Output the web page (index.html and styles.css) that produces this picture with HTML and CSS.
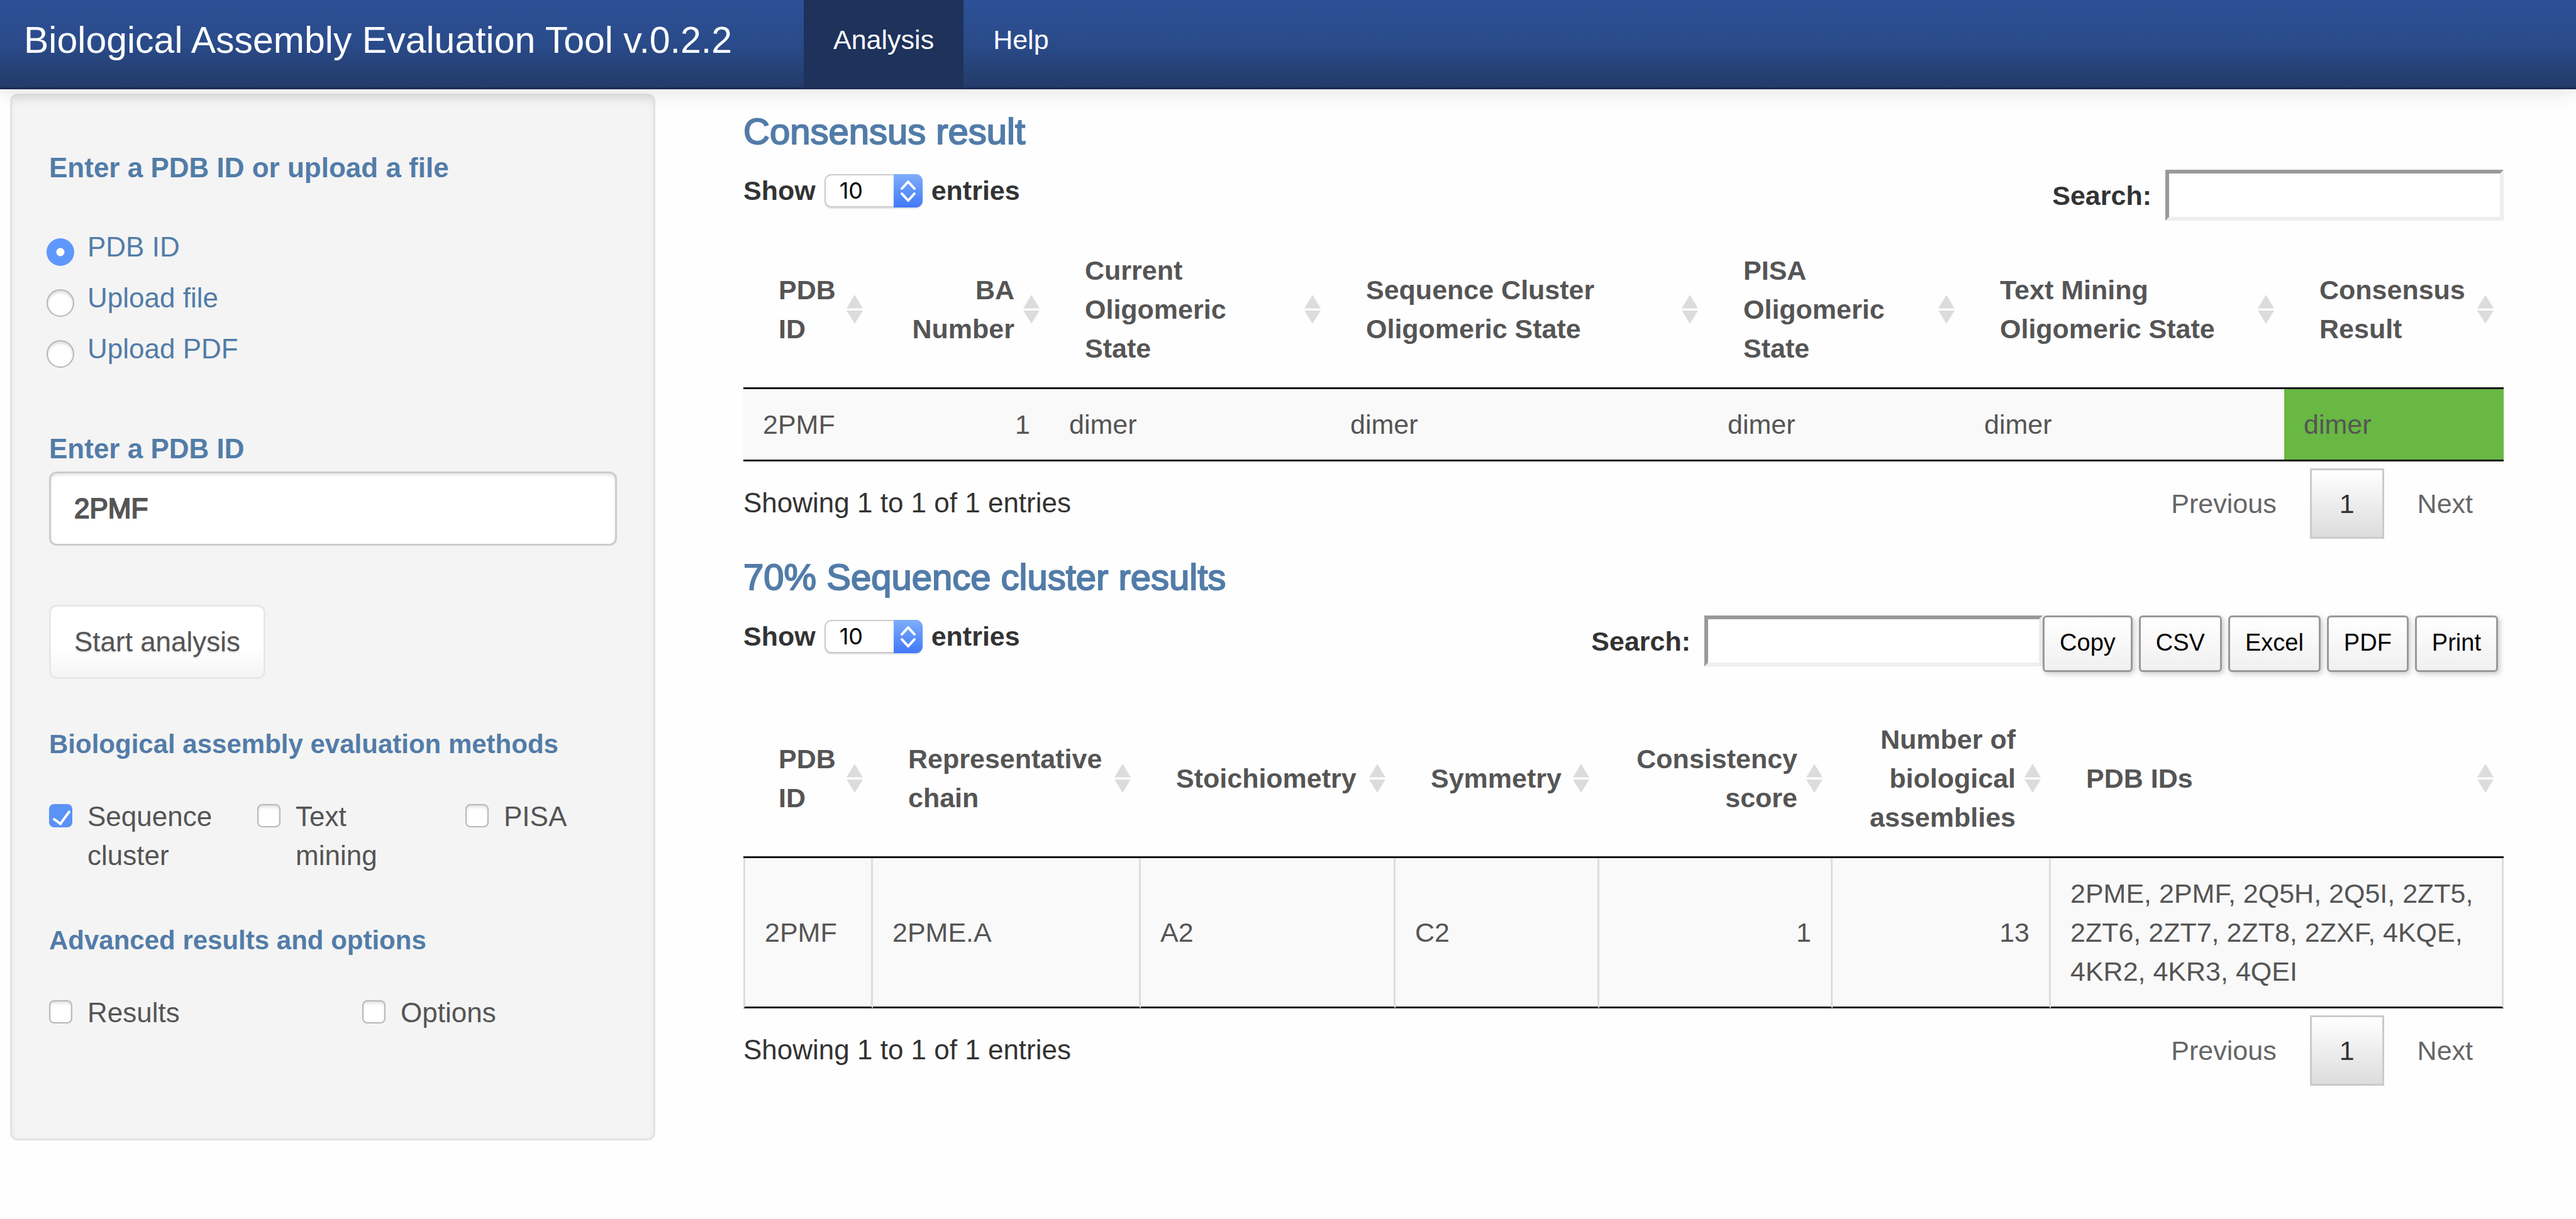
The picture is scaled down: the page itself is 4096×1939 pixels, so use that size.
FILE: index.html
```html
<!DOCTYPE html>
<html lang="en">
<head>
<meta charset="utf-8">
<title>Biological Assembly Evaluation Tool</title>
<link rel="stylesheet" href="styles.css">
</head>
<body>
<svg class="sprite" aria-hidden="true">
  <symbol id="sort" viewBox="0 0 26 46"><path d="M13 0 26 21.500H0zM0 25h26L13 46z" fill="#dcdcdc"/></symbol>
  <symbol id="updown" viewBox="0 0 46 53"><path d="M13 23 23 12 33 23M13 31 23 42 33 31" fill="none" stroke="#fff" stroke-width="4" stroke-linecap="round" stroke-linejoin="round"/></symbol>
</svg>

<header class="navbar">
  <span class="brand">Biological Assembly Evaluation Tool v.0.2.2</span>
  <nav class="nav">
    <a class="nav-link active" href="#analysis">Analysis</a>
    <a class="nav-link" href="#help">Help</a>
  </nav>
</header>

<div class="page">
  <form class="well">
    <fieldset class="group">
      <legend class="label">Enter a PDB ID or upload a file</legend>
      <div class="radios">
        <label class="radio"><input type="radio" name="source" checked><span>PDB ID</span></label>
        <label class="radio"><input type="radio" name="source"><span>Upload file</span></label>
        <label class="radio"><input type="radio" name="source"><span>Upload PDF</span></label>
      </div>
    </fieldset>

    <div class="field">
      <label class="label" for="pdb">Enter a PDB ID</label>
      <input class="text-input" id="pdb" type="text" value="2PMF">
    </div>

    <button class="btn" type="button">Start analysis</button>

    <h5 class="subheading">Biological assembly evaluation methods</h5>
    <div class="checks thirds">
      <label class="check"><input type="checkbox" checked><span>Sequence cluster</span></label>
      <label class="check"><input type="checkbox"><span>Text mining</span></label>
      <label class="check"><input type="checkbox"><span>PISA</span></label>
    </div>

    <h5 class="subheading">Advanced results and options</h5>
    <div class="checks halves">
      <label class="check"><input type="checkbox"><span>Results</span></label>
      <label class="check"><input type="checkbox"><span>Options</span></label>
    </div>
  </form>

  <main class="main">
    <section class="result">
      <h4 class="heading">Consensus result</h4>
      <div class="toolbar">
        <label class="length">Show
          <span class="select"><select><option>10</option></select><svg><use href="#updown"/></svg></span>
          entries</label>
        <label class="search">Search:<input type="search"></label>
      </div>
      <table class="table">
        <colgroup><col class="w206"><col class="w281"><col class="w447"><col class="w600"><col class="w408"><col class="w508"><col class="w349"></colgroup>
        <thead>
          <tr>
            <th>PDB ID<svg><use href="#sort"/></svg></th>
            <th class="num">BA Number<svg><use href="#sort"/></svg></th>
            <th>Current Oligomeric State<svg><use href="#sort"/></svg></th>
            <th>Sequence Cluster Oligomeric State<svg><use href="#sort"/></svg></th>
            <th>PISA Oligomeric State<svg><use href="#sort"/></svg></th>
            <th>Text Mining Oligomeric State<svg><use href="#sort"/></svg></th>
            <th>Consensus Result<svg><use href="#sort"/></svg></th>
          </tr>
        </thead>
        <tbody>
          <tr><td>2PMF</td><td class="num">1</td><td>dimer</td><td>dimer</td><td>dimer</td><td>dimer</td><td class="good">dimer</td></tr>
        </tbody>
      </table>
      <div class="footer">
        <span class="info">Showing 1 to 1 of 1 entries</span>
        <div class="pager"><button type="button">Previous</button><button class="current" type="button">1</button><button type="button">Next</button></div>
      </div>
    </section>

    <section class="result">
      <h4 class="heading">70% Sequence cluster results</h4>
      <div class="toolbar with-export">
        <label class="length">Show
          <span class="select"><select><option>10</option></select><svg><use href="#updown"/></svg></span>
          entries</label>
        <label class="search">Search:<input type="search"></label>
        <div class="export">
          <button type="button">Copy</button>
          <button type="button">CSV</button>
          <button type="button">Excel</button>
          <button type="button">PDF</button>
          <button type="button">Print</button>
        </div>
      </div>
      <table class="table bordered">
        <colgroup><col class="w206"><col class="w426"><col class="w405"><col class="w324"><col class="w371"><col class="w347"><col class="w720"></colgroup>
        <thead>
          <tr>
            <th>PDB ID<svg><use href="#sort"/></svg></th>
            <th>Representative chain<svg><use href="#sort"/></svg></th>
            <th>Stoichiometry<svg><use href="#sort"/></svg></th>
            <th>Symmetry<svg><use href="#sort"/></svg></th>
            <th class="num">Consistency score<svg><use href="#sort"/></svg></th>
            <th class="num">Number of biological assemblies<svg><use href="#sort"/></svg></th>
            <th>PDB IDs<svg><use href="#sort"/></svg></th>
          </tr>
        </thead>
        <tbody>
          <tr><td>2PMF</td><td>2PME.A</td><td>A2</td><td>C2</td><td class="num">1</td><td class="num">13</td><td>2PME, 2PMF, 2Q5H, 2Q5I, 2ZT5, 2ZT6, 2ZT7, 2ZT8, 2ZXF, 4KQE, 4KR2, 4KR3, 4QEI</td></tr>
        </tbody>
      </table>
      <div class="footer">
        <span class="info">Showing 1 to 1 of 1 entries</span>
        <div class="pager"><button type="button">Previous</button><button class="current" type="button">1</button><button type="button">Next</button></div>
      </div>
    </section>
  </main>
</div>
</body>
</html>
```
FILE: styles.css
```css
* { box-sizing: border-box; }

body {
  margin: 0;
  background: #fefefe;
  color: #555;
  font: 43px/62px "Liberation Sans", Arial, sans-serif;
}

button, input, select { font: inherit; color: inherit; margin: 0; }

.sprite { display: none; }

/* Top bar */
.navbar {
  position: relative;
  display: flex;
  height: 142px;
  border-bottom: 3px solid #1b2b52;
  background: linear-gradient(#2d5096, #2a4b8a 50%, #233b69);
  box-shadow: 0 3px 31px rgba(0, 0, 0, .12);
  color: #fff;
}
.brand { padding: 33px 114px 0 38px; font-size: 59px; }
.nav { display: flex; }
.nav-link { padding: 32px 47px 0; color: #fff; text-decoration: none; }
.nav-link.active { background: #1e325b; }

.page {
  display: flex;
  align-items: flex-start;
  gap: 140px;
  padding: 7px 115px 0 16px;
}

/* Sidebar */
.well {
  flex: none;
  width: calc(25vw + 2px);
  padding: 84px 58px 169px 59px;
  border: 3px solid #e3e3e3;
  border-radius: 12px;
  background: #f4f4f4;
  box-shadow: inset 0 6px 9px rgba(0, 0, 0, .06);
  font-size: 44px;
}
.group { margin: 0 0 97px; padding: 0; border: 0; }
.label { display: block; padding: 0; color: #527ca8; font-weight: bold; }
.radios { display: flex; flex-direction: column; gap: 19px; margin-top: 64px; color: #527ca8; }
.radio, .check { display: flex; align-items: flex-start; }
.radio input {
  appearance: none;
  flex: none;
  width: 44px;
  height: 44px;
  margin: 17px 21px 0 -4px;
  border: 2px solid #b5b5b5;
  border-radius: 50%;
  background: #fff;
  box-shadow: inset 0 3px 4px rgba(0, 0, 0, .15);
}
.radio input:checked {
  border: 0;
  background: radial-gradient(circle, #fff 6px, #5f97fb 7px);
  box-shadow: none;
}
.text-input {
  display: block;
  width: 100%;
  height: 118px;
  margin-top: 5px;
  padding: 0 37px;
  border: 3px solid #ccc;
  border-radius: 12px;
  background: #fff;
  box-shadow: inset 0 3px 4px rgba(0, 0, 0, .1);
  -webkit-text-stroke: 2px;
}
.btn {
  display: block;
  height: 118px;
  margin-top: 94px;
  padding: 0 37px;
  border: 3px solid #e7e7e7;
  border-radius: 12px;
  background: linear-gradient(#fff 60%, #f4f4f4);
  text-shadow: 0 2px 2px rgba(0, 0, 0, .15);
}
.subheading { margin: 73px 0 53px; color: #527ca8; font-size: 42px; font-weight: bold; }
.checks { display: grid; }
.thirds { grid-template-columns: 331px 331px 1fr; }
.halves { grid-template-columns: 498px 1fr; }
.thirds .check { max-width: 270px; }
.check input {
  appearance: none;
  flex: none;
  width: 37px;
  height: 37px;
  margin: 11px 24px 0 0;
  border: 2px solid #b8b8b8;
  border-radius: 8px;
  background: #fff;
  box-shadow: inset 0 3px 4px rgba(0, 0, 0, .12);
}
.check input:checked {
  border: 0;
  background: #5a92f5;
  box-shadow: none;
}
.check input:checked::after {
  content: "";
  display: block;
  width: 12px;
  height: 23px;
  margin: 5px 0 0 12px;
  border: solid #fff;
  border-width: 0 4px 4px 0;
  transform: rotate(36deg);
}

/* Results */
.main { flex: 1; padding-top: 28px; color: #333; }
.result { margin-bottom: 29px; }
.heading {
  margin: 0 0 29px;
  color: #527ca8;
  font-size: 58px;
  font-weight: normal;
  line-height: 64px;
  -webkit-text-stroke: 2px;
}
.toolbar { display: flex; align-items: flex-start; height: 98px; font-weight: bold; }
.toolbar.with-export { height: 135px; }
.length { display: flex; align-items: center; gap: 14px; margin-right: auto; padding-top: 2px; }
.select { position: relative; display: block; width: 156px; height: 53px; }
.select select {
  appearance: none;
  display: block;
  width: 100%;
  height: 53px;
  padding: 0 22px;
  border: 2px solid #ccc;
  border-radius: 11px;
  background: #fff;
  box-shadow: 0 2px 2px rgba(0, 0, 0, .12);
  color: #000;
  font: 36px/49px Inter, sans-serif;
}
.select svg {
  position: absolute;
  top: 0;
  right: 0;
  width: 46px;
  height: 53px;
  border-radius: 0 11px 11px 0;
  background: linear-gradient(#7eaefb, #4178f8);
  pointer-events: none;
}
.search { display: flex; align-items: center; gap: 22px; }
.search input {
  width: 538px;
  height: 81px;
  border: 6px solid;
  border-color: #999 #eee #eee #999;
  border-radius: 0;
  background: #fff;
  appearance: none;
  outline: 0;
}
.export { display: flex; gap: 10px; padding-right: 9px; }
.export button {
  height: 90px;
  padding: 0 24px 4px;
  border: 3px solid #999;
  border-radius: 6px;
  background: linear-gradient(#fff, #f0f0f0);
  box-shadow: 3px 3px 9px rgba(0, 0, 0, .2);
  color: #000;
  font-size: 38px;
  font-weight: normal;
}

.table { width: 100%; table-layout: fixed; border-collapse: separate; border-spacing: 0; color: #555; }
.w206 { width: 206px; }
.w281 { width: 281px; }
.w324 { width: 324px; }
.w347 { width: 347px; }
.w349 { width: 349px; }
.w371 { width: 371px; }
.w405 { width: 405px; }
.w408 { width: 408px; }
.w426 { width: 426px; }
.w447 { width: 447px; }
.w508 { width: 508px; }
.w600 { width: 600px; }
.w720 { width: 720px; }
.table th {
  position: relative;
  padding: 31px 56px;
  border-bottom: 3px solid #161616;
  text-align: left;
  vertical-align: middle;
}
.table th svg {
  position: absolute;
  top: calc(50% - 23px);
  right: 16px;
  width: 26px;
  height: 46px;
}
.table td {
  padding: 25px 31px;
  border-bottom: 3px solid #161616;
  background: #f9f9f9;
  vertical-align: middle;
}
.table .num { text-align: right; }
.table td.good { background: #68b843; }
.bordered td { border-right: 3px solid #ddd; }
.bordered td:first-child { border-left: 3px solid #ddd; }

.footer { display: flex; justify-content: space-between; align-items: flex-start; padding-top: 11px; }
.info { padding-top: 24px; font-size: 44px; }
.pager { display: flex; gap: 6px; padding-right: 2px; }
.pager button {
  height: 112px;
  padding: 0 44px;
  border: 3px solid transparent;
  background: none;
  color: #666;
}
.pager .current {
  border-color: #cacaca;
  background: linear-gradient(#fff, #dcdcdc);
  color: #333;
}
```
